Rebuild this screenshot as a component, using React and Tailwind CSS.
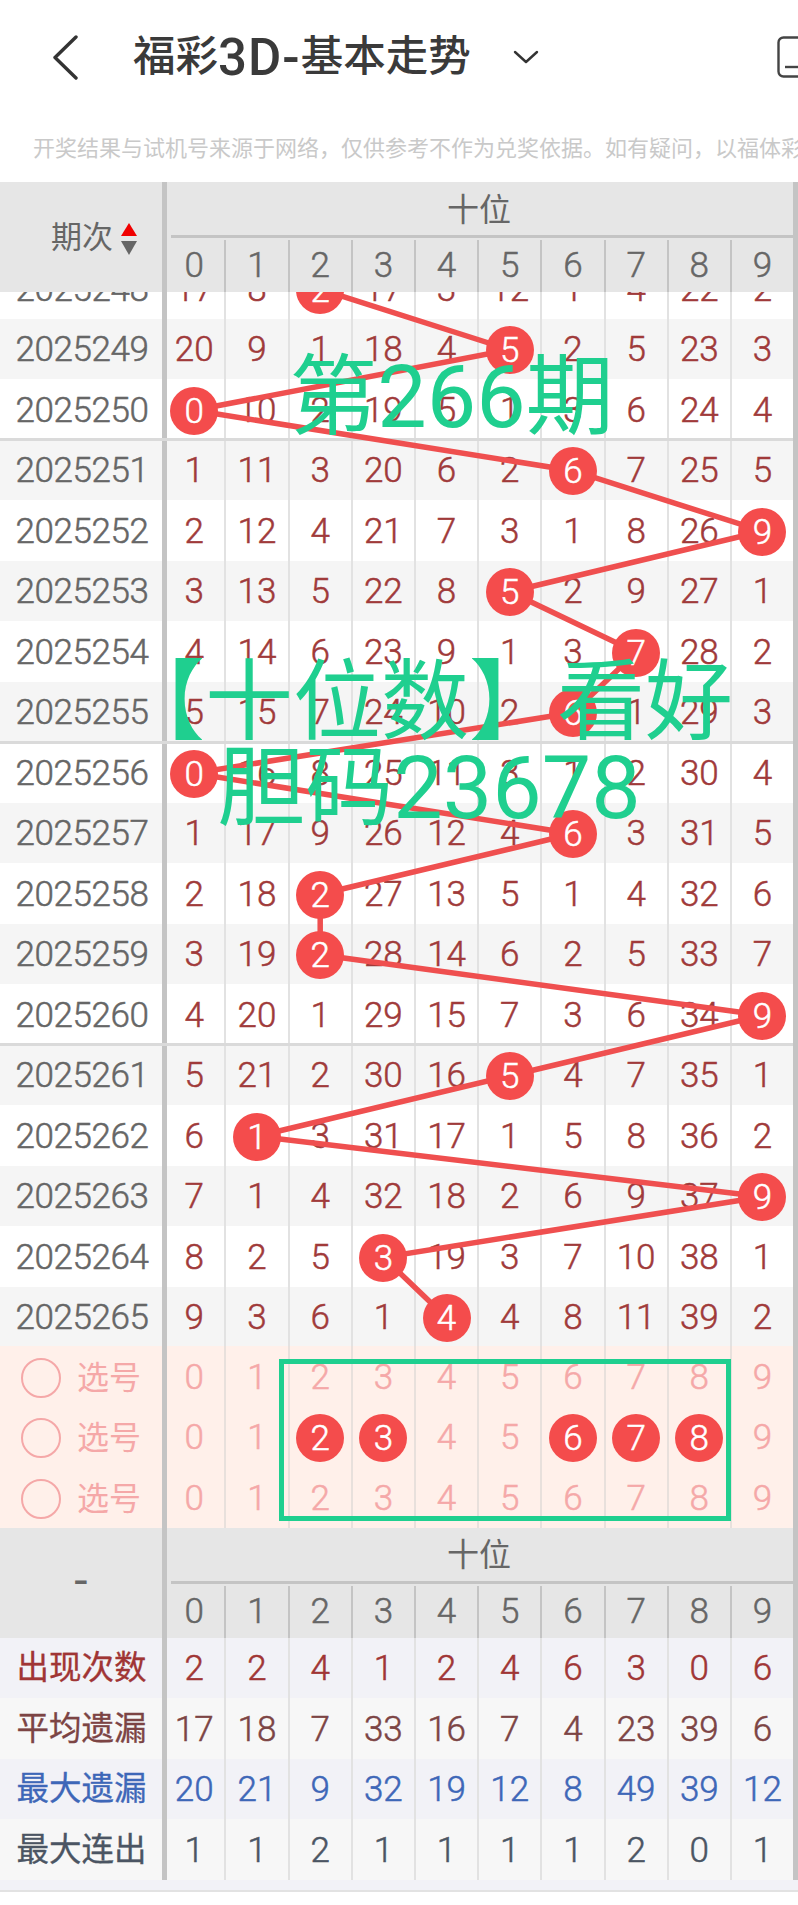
const rows = [
  ['2025248', [17, 8, 2, 17, 3, 12, 1, 4, 22, 2], 2],
  ['2025249', [20, 9, 1, 18, 4, 5, 2, 5, 23, 3], 5],
  ['2025250', [0, 10, 2, 19, 5, 1, 3, 6, 24, 4], 0],
  ['2025251', [1, 11, 3, 20, 6, 2, 6, 7, 25, 5], 6],
  ['2025252', [2, 12, 4, 21, 7, 3, 1, 8, 26, 9], 9],
  ['2025253', [3, 13, 5, 22, 8, 5, 2, 9, 27, 1], 5],
  ['2025254', [4, 14, 6, 23, 9, 1, 3, 7, 28, 2], 7],
  ['2025255', [5, 15, 7, 24, 10, 2, 6, 1, 29, 3], 6],
  ['2025256', [0, 16, 8, 25, 11, 3, 1, 2, 30, 4], 0],
  ['2025257', [1, 17, 9, 26, 12, 4, 6, 3, 31, 5], 6],
  ['2025258', [2, 18, 2, 27, 13, 5, 1, 4, 32, 6], 2],
  ['2025259', [3, 19, 2, 28, 14, 6, 2, 5, 33, 7], 2],
  ['2025260', [4, 20, 1, 29, 15, 7, 3, 6, 34, 9], 9],
  ['2025261', [5, 21, 2, 30, 16, 5, 4, 7, 35, 1], 5],
  ['2025262', [6, 1, 3, 31, 17, 1, 5, 8, 36, 2], 1],
  ['2025263', [7, 1, 4, 32, 18, 2, 6, 9, 37, 9], 9],
  ['2025264', [8, 2, 5, 3, 19, 3, 7, 10, 38, 1], 3],
  ['2025265', [9, 3, 6, 1, 4, 4, 8, 11, 39, 2], 4],
];
const digits = [0, 1, 2, 3, 4, 5, 6, 7, 8, 9];
const chosen = [2, 3, 6, 7, 8];
const stats = [
  ['出现次数', [2, 2, 4, 1, 2, 4, 6, 3, 0, 6], 'text-[#a03535]', 'bg-[#f2f2f7]'],
  ['平均遗漏', [17, 18, 7, 33, 16, 7, 4, 23, 39, 6], 'text-[#7c4444]', 'bg-[#f7f7f7]'],
  ['最大遗漏', [20, 21, 9, 32, 19, 12, 8, 49, 39, 12], 'text-[#3e67b8]', 'bg-[#f2f2f7]'],
  ['最大连出', [1, 1, 2, 1, 1, 1, 1, 2, 0, 1], 'text-[#4b5563]', 'bg-[#f7f7f7]'],
];
const gridCols = 'grid grid-cols-[167px_59.4px_repeat(9,63.2px)]';
const FONT = "font-['Roboto','Noto_Sans_CJK_SC',sans-serif]";
const NUM = 'text-[35px] font-light [-webkit-text-stroke:0.5px_currentColor]';
const ROW_H = 60.5;

function Ball({ n }) {
  return (
    <span className="relative z-20 flex h-[48px] w-[48px] items-center justify-center rounded-full bg-[#f44c4c] pt-[2px] text-white">
      {n}
    </span>
  );
}

function Cell({ first, className = '', children }) {
  return (
    <div className={`flex items-center justify-center border-r-2 ${first ? 'pr-[3px]' : ''} ${className}`}>
      {children}
    </div>
  );
}

function Side({ className = '', children }) {
  return (
    <div className={`flex items-center justify-center border-r-[5px] border-[#c4c4c4] ${className}`}>{children}</div>
  );
}

function TableHead({ label }) {
  return (
    <div className="flex bg-[#e6e6e6]">
      <div className="flex w-[167px] shrink-0 items-center justify-center border-r-[5px] border-[#c4c4c4]">{label}</div>
      <div className="flex-1">
        <div className="ml-[4px] flex h-[56px] items-center justify-center border-b-[3px] border-[#c4c4c4] pr-[8px] pt-[2px] text-[32px] text-[#666]">十位</div>
        <div className={`grid h-[54px] grid-cols-[59.4px_repeat(9,63.2px)] pt-[2px] text-[#666] ${NUM}`}>
          {digits.map((d) => (
            <Cell key={d} first={d === 0} className="border-[#c4c4c4]">{d}</Cell>
          ))}
        </div>
      </div>
    </div>
  );
}

export default function App() {
  const pts = rows.map((r, i) => [162.2 + 63.2 * (r[2] + 0.5), ROW_H * (i + 0.5) + 1]);
  return (
    <div className={`relative h-[1905px] w-[798px] overflow-hidden bg-white ${FONT}`}>
      <div className="flex h-[115px] items-center pb-[1px]">
        <svg viewBox="0 0 26 45" className="ml-[52px] h-[45px] w-[26px] shrink-0" fill="none" stroke="#333" strokeWidth="3.4" strokeLinecap="round" strokeLinejoin="round">
          <path d="M24 2 L3 22.5 L24 43" />
        </svg>
        <div className="ml-[55px] flex w-[341px] shrink-0 items-center whitespace-nowrap text-[42.5px] font-medium leading-none text-[#3a3a3a]">
          <span>福彩</span>
          <span className="text-[51px] tracking-[1px]">3D-</span>
          <span>基本走势</span>
        </div>
        <svg viewBox="0 0 26 14" className="ml-[39px] h-[14px] w-[26px] shrink-0" fill="none" stroke="#333" strokeWidth="2.4" strokeLinecap="round" strokeLinejoin="round">
          <path d="M2 2 L13 12 L24 2" />
        </svg>
        <svg viewBox="0 0 44 42" className="ml-[238px] h-[42px] w-[44px] shrink-0" fill="none" stroke="#444" strokeWidth="2.4">
          <rect x="1.5" y="1.5" width="41" height="39" rx="5" />
          <path d="M8 31 H22" />
        </svg>
      </div>
      <div className="ml-[33px] flex h-[67px] items-start whitespace-nowrap pt-[19px] text-[22px] leading-[30px] text-[#c9c9c9]">
        开奖结果与试机号来源于网络，仅供参考不作为兑奖依据。如有疑问，以福体彩官方公布为准。
      </div>

      <div className="w-[798px] overflow-hidden border-r-[5px] border-[#c4c4c4]">
        <TableHead
          label={
            <div className="flex items-center pl-[26px] pt-[3px] text-[31px] text-[#666]">
              <span>期次</span>
              <span className="ml-[8px] flex flex-col items-center gap-[5px]">
                <svg viewBox="0 0 16 13" className="h-[13px] w-[16px]"><path d="M8 0 L16 13 H0 Z" fill="#f00000" /></svg>
                <svg viewBox="0 0 16 14" className="h-[14px] w-[16px]"><path d="M0 0 H16 L8 14 Z" fill="#666" /></svg>
              </span>
            </div>
          }
        />

        <div className="h-[1054px] overflow-hidden">
          <div className="relative -mt-[34px]">
            <svg className="pointer-events-none absolute left-0 top-0 z-10 h-[1089px] w-[798px]" viewBox="0 0 798 1089">
              <polyline points={pts.map((p) => p.join(',')).join(' ')} fill="none" stroke="#ef4f4f" strokeWidth="5.5" />
            </svg>
            {rows.map((r, i) => (
              <div
                key={r[0]}
                className={`${gridCols} relative h-[60.5px] ${i % 2 === 1 ? 'bg-[#f5f5f5]' : 'bg-white'}`}
              >
                {(i === 3 || i === 8 || i === 13) && (
                  <div className="absolute inset-x-0 -top-[1.5px] h-[3px] bg-[#dadada]" />
                )}
                <Side className={`pl-[2px] pt-[3px] tracking-[-0.4px] text-[#666] ${NUM}`}>{r[0]}</Side>
                {r[1].map((v, c) => (
                  <Cell key={c} first={c === 0} className={`border-[#e2e2e2] pt-[3px] text-[#a03a3a] ${NUM}`}>
                    {c === r[2] ? <Ball n={v} /> : v}
                  </Cell>
                ))}
              </div>
            ))}
          </div>
        </div>

        <div className="relative bg-[#fff0ea]">
          {[0, 1, 2].map((k) => (
            <div key={k} className={`${gridCols} h-[60.5px]`}>
              <Side className="gap-[16px] pt-[3px] text-[32px] text-[#f5a8a8]">
                <span className="h-[40px] w-[40px] rounded-full border-2 border-[#f5a8a8]" />
                <span>选号</span>
              </Side>
              {digits.map((d) => (
                <Cell key={d} first={d === 0} className={`border-[#e8e0dc] pt-[3px] text-[#f5a8a8] ${NUM}`}>
                  {k === 1 && chosen.includes(d) ? <Ball n={d} /> : d}
                </Cell>
              ))}
            </div>
          ))}
          <div className="absolute left-[279px] top-[13px] z-20 h-[162px] w-[452px] border-[5px] border-[#1fcf8f]" />
        </div>

        <TableHead label={<span className="mb-[3px] text-[48px] leading-none text-[#666]">-</span>} />

        {stats.map(([label, vals, color, bg]) => (
          <div key={label} className={`${gridCols} h-[60.5px] ${bg} ${color}`}>
            <Side className="pl-[1px] pt-[2px] text-[32.5px] [-webkit-text-stroke:0.3px_currentColor]">{label}</Side>
            {vals.map((v, c) => (
              <Cell key={c} first={c === 0} className={`border-[#e2e2e2] pt-[3px] ${NUM}`}>{v}</Cell>
            ))}
          </div>
        ))}
      </div>
      <div className="h-[10px] bg-[#f2f2f7]" />
      <div className="h-[2px] bg-[#e2e2e2]" />

      <div className="absolute left-0 top-[351px] z-30 w-[798px] pl-[105px] text-center text-[88px] leading-[92px] text-[#1fcf8f]">
        第266期
      </div>
      <div className="absolute left-0 top-[659px] z-30 w-[798px] text-center text-[88px] leading-[85.5px] text-[#1fcf8f]">
        <div className="pl-[52px]">【十位数】看好</div>
        <div className="pl-[60px]">胆码23678</div>
      </div>
    </div>
  );
}
